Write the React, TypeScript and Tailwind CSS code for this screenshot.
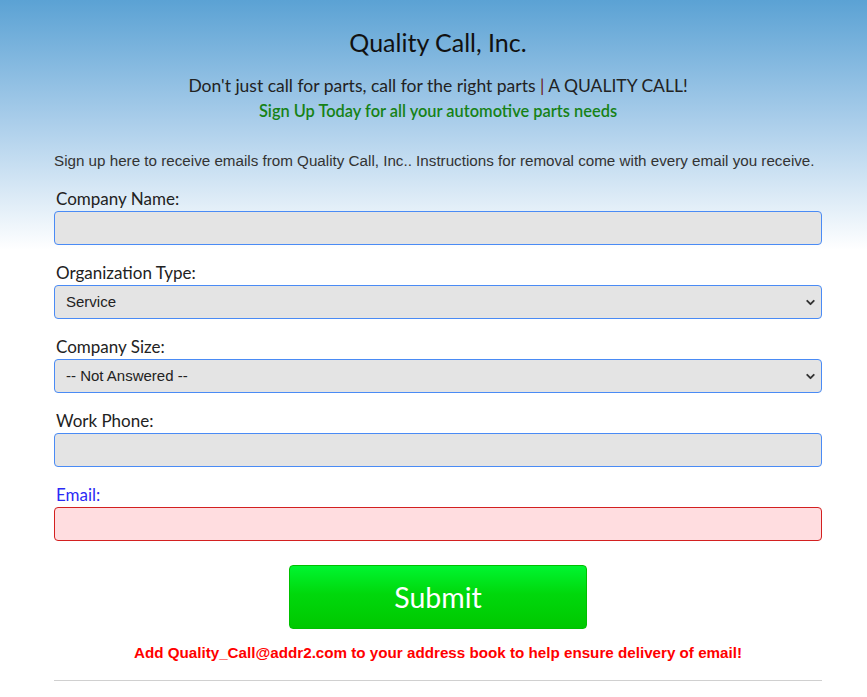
import { ChevronDown } from 'lucide-react';

const heading = "font-['Lato','Noto_Sans',sans-serif]";
const arial = "font-['Liberation_Sans',Arial,sans-serif]";

function Label({ text, blue }: { text: string; blue?: boolean }) {
  return (
    <label className={`block pl-[2px] text-[17px] leading-[22px] ${heading} ${blue ? 'text-[#2b2bf5]' : 'text-[#222]'}`}>
      {text}
    </label>
  );
}

function SelectBox({ value }: { value: string }) {
  return (
    <div className="relative mt-px h-[34px] rounded-[4px] border border-[#4a8bf5] bg-[#e4e4e4]">
      <select
        defaultValue={value}
        className={`h-full w-full appearance-none bg-transparent pl-[11px] text-[15px] text-[#222] outline-none ${arial}`}
      >
        <option>{value}</option>
      </select>
      <ChevronDown className="pointer-events-none absolute right-[4px] top-[10px] h-[13px] w-[13px] text-[#333]" strokeWidth={3.5} />
    </div>
  );
}

function TextBox({ error }: { error?: boolean }) {
  return (
    <input
      type="text"
      className={`mt-px block h-[34px] w-full rounded-[4px] border outline-none ${
        error ? 'border-[#d32020] bg-[#ffdde0]' : 'border-[#4a8bf5] bg-[#e4e4e4]'
      }`}
    />
  );
}

export default function App() {
  return (
    <div className="min-h-[697px] bg-[linear-gradient(to_bottom,#5ba2d4_0px,#a9cdea_120px,#ffffff_250px)]">
      <div className="pt-[27px] text-center">
        <h1 className={`text-[25px] leading-[30px] text-[#111] ${heading} pl-[9px]`}>Quality Call, Inc.</h1>
        <p className={`mt-[18px] text-[17.5px] leading-[22px] text-[#222] ${heading} pl-[9px]`}>
          Don't just call for parts, call for the right parts <span className="text-[#6b1818]">|</span> A QUALITY CALL!
        </p>
        <p className={`mt-[3px] text-[16.4px] leading-[22px] font-semibold text-[#168216] ${heading} pl-[9px]`}>
          Sign Up Today for all your automotive parts needs
        </p>
      </div>

      <div className="ml-[54px] w-[768px]">
        <p className={`mt-[30px] text-[15.2px] leading-[18px] text-[#333] ${arial}`}>
          Sign up here to receive emails from Quality Call, Inc.. Instructions for removal come with every email you receive.
        </p>

        <form className="mt-[18px]" onSubmit={e => e.preventDefault()}>
          <div>
            <Label text="Company Name:" />
            <TextBox />
          </div>
          <div className="mt-[17px]">
            <Label text="Organization Type:" />
            <SelectBox value="Service" />
          </div>
          <div className="mt-[17px]">
            <Label text="Company Size:" />
            <SelectBox value="-- Not Answered --" />
          </div>
          <div className="mt-[17px]">
            <Label text="Work Phone:" />
            <TextBox />
          </div>
          <div className="mt-[17px]">
            <Label text="Email:" blue />
            <TextBox error />
          </div>

          <div className="mt-[24px] flex justify-center">
            <button
              type="submit"
              className={`h-[64px] w-[298px] rounded-[4px] border border-[#00c000] bg-[linear-gradient(to_bottom,#00f530_0%,#00d80c_45%,#00c800_100%)] text-[28.5px] text-white ${heading}`}
            >
              Submit
            </button>
          </div>
        </form>

        <p className={`mt-[15px] text-center text-[15.2px] leading-[18px] font-bold text-[#f00] ${arial}`}>
          Add Quality_Call@addr2.com to your address book to help ensure delivery of email!
        </p>

        <hr className="mt-[18px] border-t border-[#d0d0d0]" />
      </div>
    </div>
  );
}
